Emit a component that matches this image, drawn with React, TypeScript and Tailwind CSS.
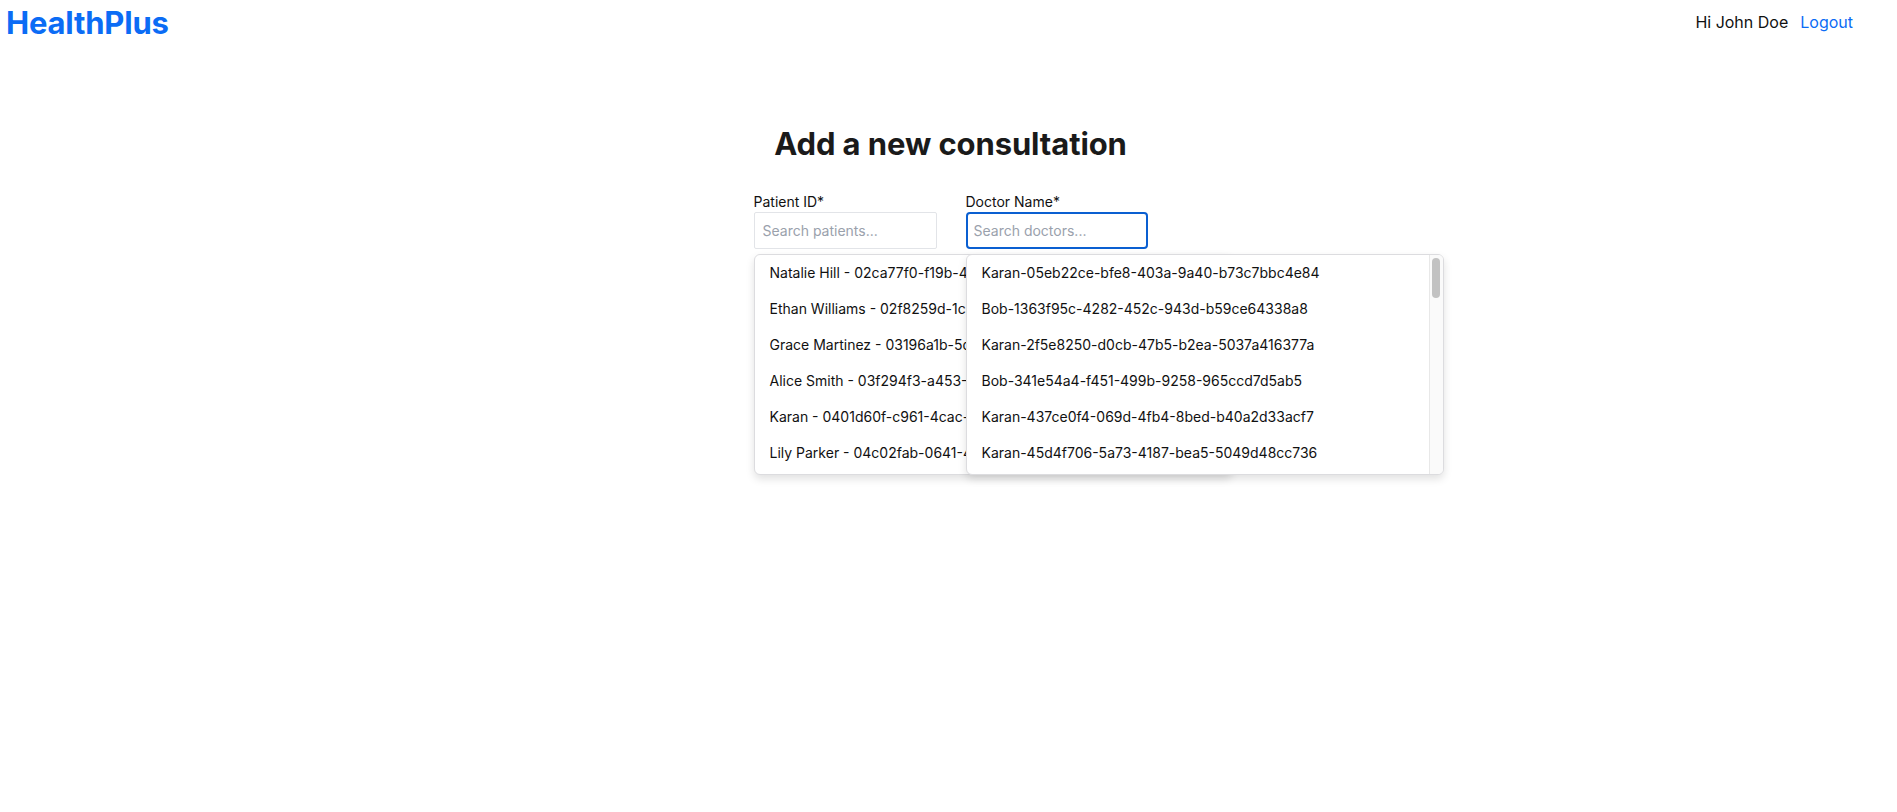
import React from 'react';

const patients = [
  'Natalie Hill - 02ca77f0-f19b-4a1e-9c3d-7b2e1f0a6d41',
  'Ethan Williams - 02f8259d-1c4e-4b7a-a2d1-3e9f6c5b8a02',
  'Grace Martinez - 03196a1b-5d2c-4e8f-b1a7-9c0d3e6f2b14',
  'Alice Smith - 03f294f3-a453-4c21-8e6b-5d7a9f1c0e37',
  'Karan - 0401d60f-c961-4cac-9b3e-2f8a6d1c7e50',
  'Lily Parker - 04c02fab-0641-4d3b-a7e9-8c1f5b2d6a93',
  'Oliver Brown - 05a1c3d2-7e4f-4b6a-9d8c-1e2f3a4b5c6d',
];

const doctors = [
  'Karan-05eb22ce-bfe8-403a-9a40-b73c7bbc4e84',
  'Bob-1363f95c-4282-452c-943d-b59ce64338a8',
  'Karan-2f5e8250-d0cb-47b5-b2ea-5037a416377a',
  'Bob-341e54a4-f451-499b-9258-965ccd7d5ab5',
  'Karan-437ce0f4-069d-4fb4-8bed-b40a2d33acf7',
  'Karan-45d4f706-5a73-4187-bea5-5049d48cc736',
  'Bob-5a7c1e2d-3f4b-4c6a-8d9e-0f1a2b3c4d5e',
];

function Dropdown({ items }: { items: string[] }) {
  return (
    <div className="absolute left-0 top-full mt-[5px] w-[478px] h-[221px] bg-white border border-[#dcdcdf] rounded-[6px] shadow-[0_4px_8px_rgba(0,0,0,0.12)] flex overflow-hidden z-10">
      {/* list */}
      <div className="flex-1 overflow-hidden">
        {items.map((item) => (
          <div
            key={item}
            className="h-9 px-[15px] flex items-center text-sm text-[#111] whitespace-nowrap"
          >
            {item}
          </div>
        ))}
      </div>
      {/* scrollbar */}
      <div className="w-[14px] bg-[#fafafa] border-l border-[#e8e8e8] flex justify-center pt-[3px]">
        <div className="w-[8px] h-[40px] rounded-full bg-[#c2c2c2]" />
      </div>
    </div>
  );
}

export default function App() {
  return (
    <div className="min-h-screen bg-white text-[#111]" style={{ fontFamily: 'Inter, "Noto Sans", sans-serif' }}>
      {/* Navbar */}
      <header className="h-[44px] flex items-center justify-between pl-[6px] pr-[44px]">
        <a href="#" className="text-[31px] font-bold tracking-[-0.2px] text-[#0b6cf5] leading-none">
          HealthPlus
        </a>
        <div className="flex items-center gap-[12px] text-base">
          <span className="text-[#111]">Hi John Doe</span>
          <a href="#" className="text-[#0b6cf5]">Logout</a>
        </div>
      </header>

      {/* Form */}
      <main className="flex flex-col items-center pt-[82px]">
        <h1 className="text-[31px] leading-9 font-bold text-[#1a1a1a] tracking-[-0.1px] pl-[4px]">
          Add a new consultation
        </h1>

        <div className="mt-[30px] flex gap-[29px] pl-[4px]">
          <div className="relative flex flex-col">
            <label className="text-sm leading-5">Patient ID*</label>
            <input
              placeholder="Search patients..."
              className="w-[183px] h-[37px] border border-[#e2e4e8] rounded-[2px] px-2 text-sm placeholder:text-[#9aa1ac] outline-none"
            />
            <Dropdown items={patients} />
          </div>

          <div className="relative flex flex-col">
            <label className="text-sm leading-5">Doctor Name*</label>
            <input
              placeholder="Search doctors..."
              className="w-[182px] h-[37px] border-2 border-[#0a5fd1] rounded-[4px] px-[6px] text-sm placeholder:text-[#9aa1ac] outline-none"
            />
            <Dropdown items={doctors} />
          </div>
        </div>
      </main>
    </div>
  );
}
